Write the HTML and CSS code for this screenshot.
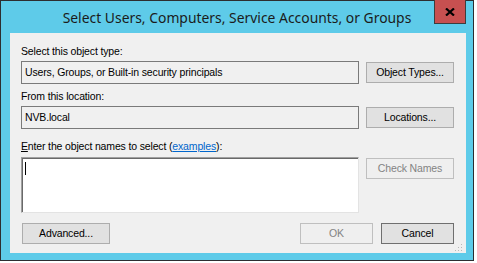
FILE: index.html
```html
<!DOCTYPE html>
<html>
<head>
<meta charset="utf-8">
<link rel="stylesheet" href="styles.css">
</head>
<body>
<div class="window">
  <div class="titlebar">
    <div class="title">Select Users, Computers, Service Accounts, or Groups</div>
    <div class="close">
      <svg width="10" height="8" viewBox="0 0 10 8"><path d="M1 0.5 L9 7.5 M9 0.5 L1 7.5" stroke="#000" stroke-width="2.2" fill="none"/></svg>
    </div>
  </div>
  <div class="content">
    <div class="label l1">Select this object type:</div>
    <div class="row">
      <div class="field">Users, Groups, or Built-in security principals</div>
      <div class="btn">Object Types...</div>
    </div>
    <div class="label l2">From this location:</div>
    <div class="row">
      <div class="field">NVB.local</div>
      <div class="btn">Locations...</div>
    </div>
    <div class="label l3"><u>E</u>nter the object names to select (<a class="link">examples</a>):</div>
    <div class="row top">
      <div class="area"><span class="caret"></span></div>
      <div class="btn disabled">Check Names</div>
    </div>
    <div class="bottom">
      <div class="btn wide">Advanced...</div>
      <div class="spacer"></div>
      <div class="btn disabled small">OK</div>
      <div class="btn default small">Cancel</div>
    </div>
    <div class="grip">
      <svg width="8" height="8" viewBox="0 0 8 8" fill="#b8b8b8">
        <rect x="6" y="0" width="1" height="1"/>
        <rect x="3" y="3" width="1" height="1"/><rect x="6" y="3" width="1" height="1"/>
        <rect x="0" y="6" width="1" height="1"/><rect x="3" y="6" width="1" height="1"/><rect x="6" y="6" width="1" height="1"/>
      </svg>
    </div>
  </div>
</div>
</body>
</html>
```
FILE: styles.css
```css
* { box-sizing: border-box; }
html, body { margin: 0; padding: 0; background: #ffffff; }
body { font-family: "Liberation Sans", Arial, sans-serif; font-size: 10.5px; letter-spacing: -0.15px; color: #000; }

.window {
  width: 474px;
  height: 261px;
  border: 1px solid #2d2d30;
  background: #5ecbe9;
  padding: 0 7px 7px 9px;
  display: flex;
  flex-direction: column;
}

.titlebar {
  position: relative;
  height: 32px;
  flex: none;
}
.title {
  text-align: center;
  font-family: "Noto Sans", "Open Sans", sans-serif;
  font-size: 13.9px;
  letter-spacing: 0;
  color: #1b1b1b;
  line-height: 20px;
  padding-top: 7px;
  margin-left: -9px;
  margin-right: -7px;
}
.close {
  position: absolute;
  right: 0;
  top: -1px;
  width: 32px;
  height: 24px;
  background: #c75050;
  border: 1px solid #3d3d3d;
  border-top: none;
  display: flex;
  align-items: center;
  justify-content: center;
  padding-top: 1px;
}

.content {
  position: relative;
  flex: 1;
  background: #f0f0f0;
  padding: 12px 12px 0 11px;
}

.label { height: 13px; line-height: 13px; white-space: nowrap; }
.l1 { margin-bottom: 3px; }
.l2 { margin-top: 6px; margin-bottom: 3px; }
.l3 { margin-top: 11px; margin-bottom: 4px; }

.row {
  display: grid;
  grid-template-columns: 338px 88px;
  column-gap: 7px;
  align-items: center;
}
.row.top { align-items: start; }

.field {
  height: 23px;
  border: 1px solid #7a7a7a;
  background: #f0f0f0;
  line-height: 21px;
  padding-left: 3px;
  white-space: nowrap;
}

.btn {
  height: 21px;
  border: 1px solid #adadad;
  background: #e1e1e1;
  text-align: center;
  line-height: 19px;
  white-space: nowrap;
}
.btn.disabled {
  border-color: #bfbfbf;
  background: #efefef;
  color: #838383;
}
.btn.default { border-color: #6f6f6f; }

.area {
  height: 56px;
  background: #fff;
  border-top: 1px solid #a0a0a0;
  border-left: 1px solid #a0a0a0;
  border-bottom: 1px solid #e3e3e3;
  border-right: 1px solid #e3e3e3;
  box-shadow: inset 1px 1px 0 #696969;
  padding: 4px 0 0 3px;
}
.row.top .btn { margin-top: 1px; }
.caret {
  display: block;
  width: 1px;
  height: 13px;
  background: #000;
}

.link { color: #0066cc; text-decoration: underline; }

.bottom {
  display: flex;
  margin-top: 10px;
  column-gap: 8px;
}
.btn.wide { width: 88px; margin-left: 1px; }
.btn.small { width: 73px; }
.spacer { flex: 1; }

.grip {
  position: absolute;
  right: 3px;
  bottom: 1px;
  width: 8px;
  height: 8px;
  line-height: 0;
}
```
